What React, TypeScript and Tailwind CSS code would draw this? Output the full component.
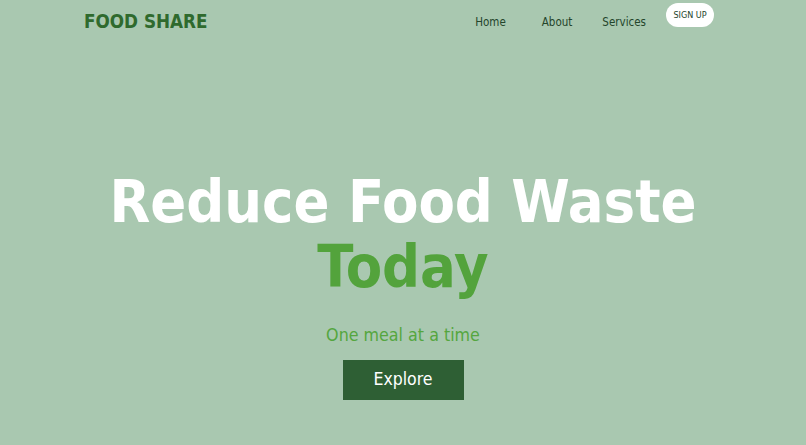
import React from 'react';

const font = { fontFamily: '"DejaVu Sans Condensed", "DejaVu Sans", Tahoma, sans-serif' };

const NavLink = ({ label, className }: { label: string; className?: string }) => (
  <a href="#" className={`text-[11.5px] text-[#24452b] leading-none ${className ?? ''}`}>
    {label}
  </a>
);

const App = () => {
  return (
    <div className="w-full h-[445px] bg-[#a9c8b0] overflow-hidden" style={font}>
      <header className="flex items-start justify-between pl-[84px] pr-[92px]">
        <div className="pt-[11px] text-[18.7px] font-bold text-[#2f6a2d] leading-[22px]">
          FOOD SHARE
        </div>
        <nav className="flex items-start">
          <NavLink label="Home" className="mt-[17px]" />
          <NavLink label="About" className="mt-[17px] ml-[36px]" />
          <NavLink label="Services" className="mt-[17px] ml-[30px]" />
          <button className="ml-[20px] mt-[3px] h-[24px] w-[48px] rounded-full bg-white text-[9px] text-[#24452b] pt-px">
            SIGN UP
          </button>
        </nav>
      </header>

      <main className="flex flex-col items-center pt-[136px]">
        <h1 className="text-center font-bold text-[59px] leading-[65px] text-white">
          Reduce Food Waste
          <br />
          <span className="text-[#53a33c]">Today</span>
        </h1>
        <p className="mt-[28px] text-[17.7px] text-[#55a63f] leading-none">One meal at a time</p>
        <button className="mt-[15px] h-[40px] w-[121px] bg-[#2e5f34] text-white text-[17.5px] leading-none">
          Explore
        </button>
      </main>
    </div>
  );
};

export default App;
